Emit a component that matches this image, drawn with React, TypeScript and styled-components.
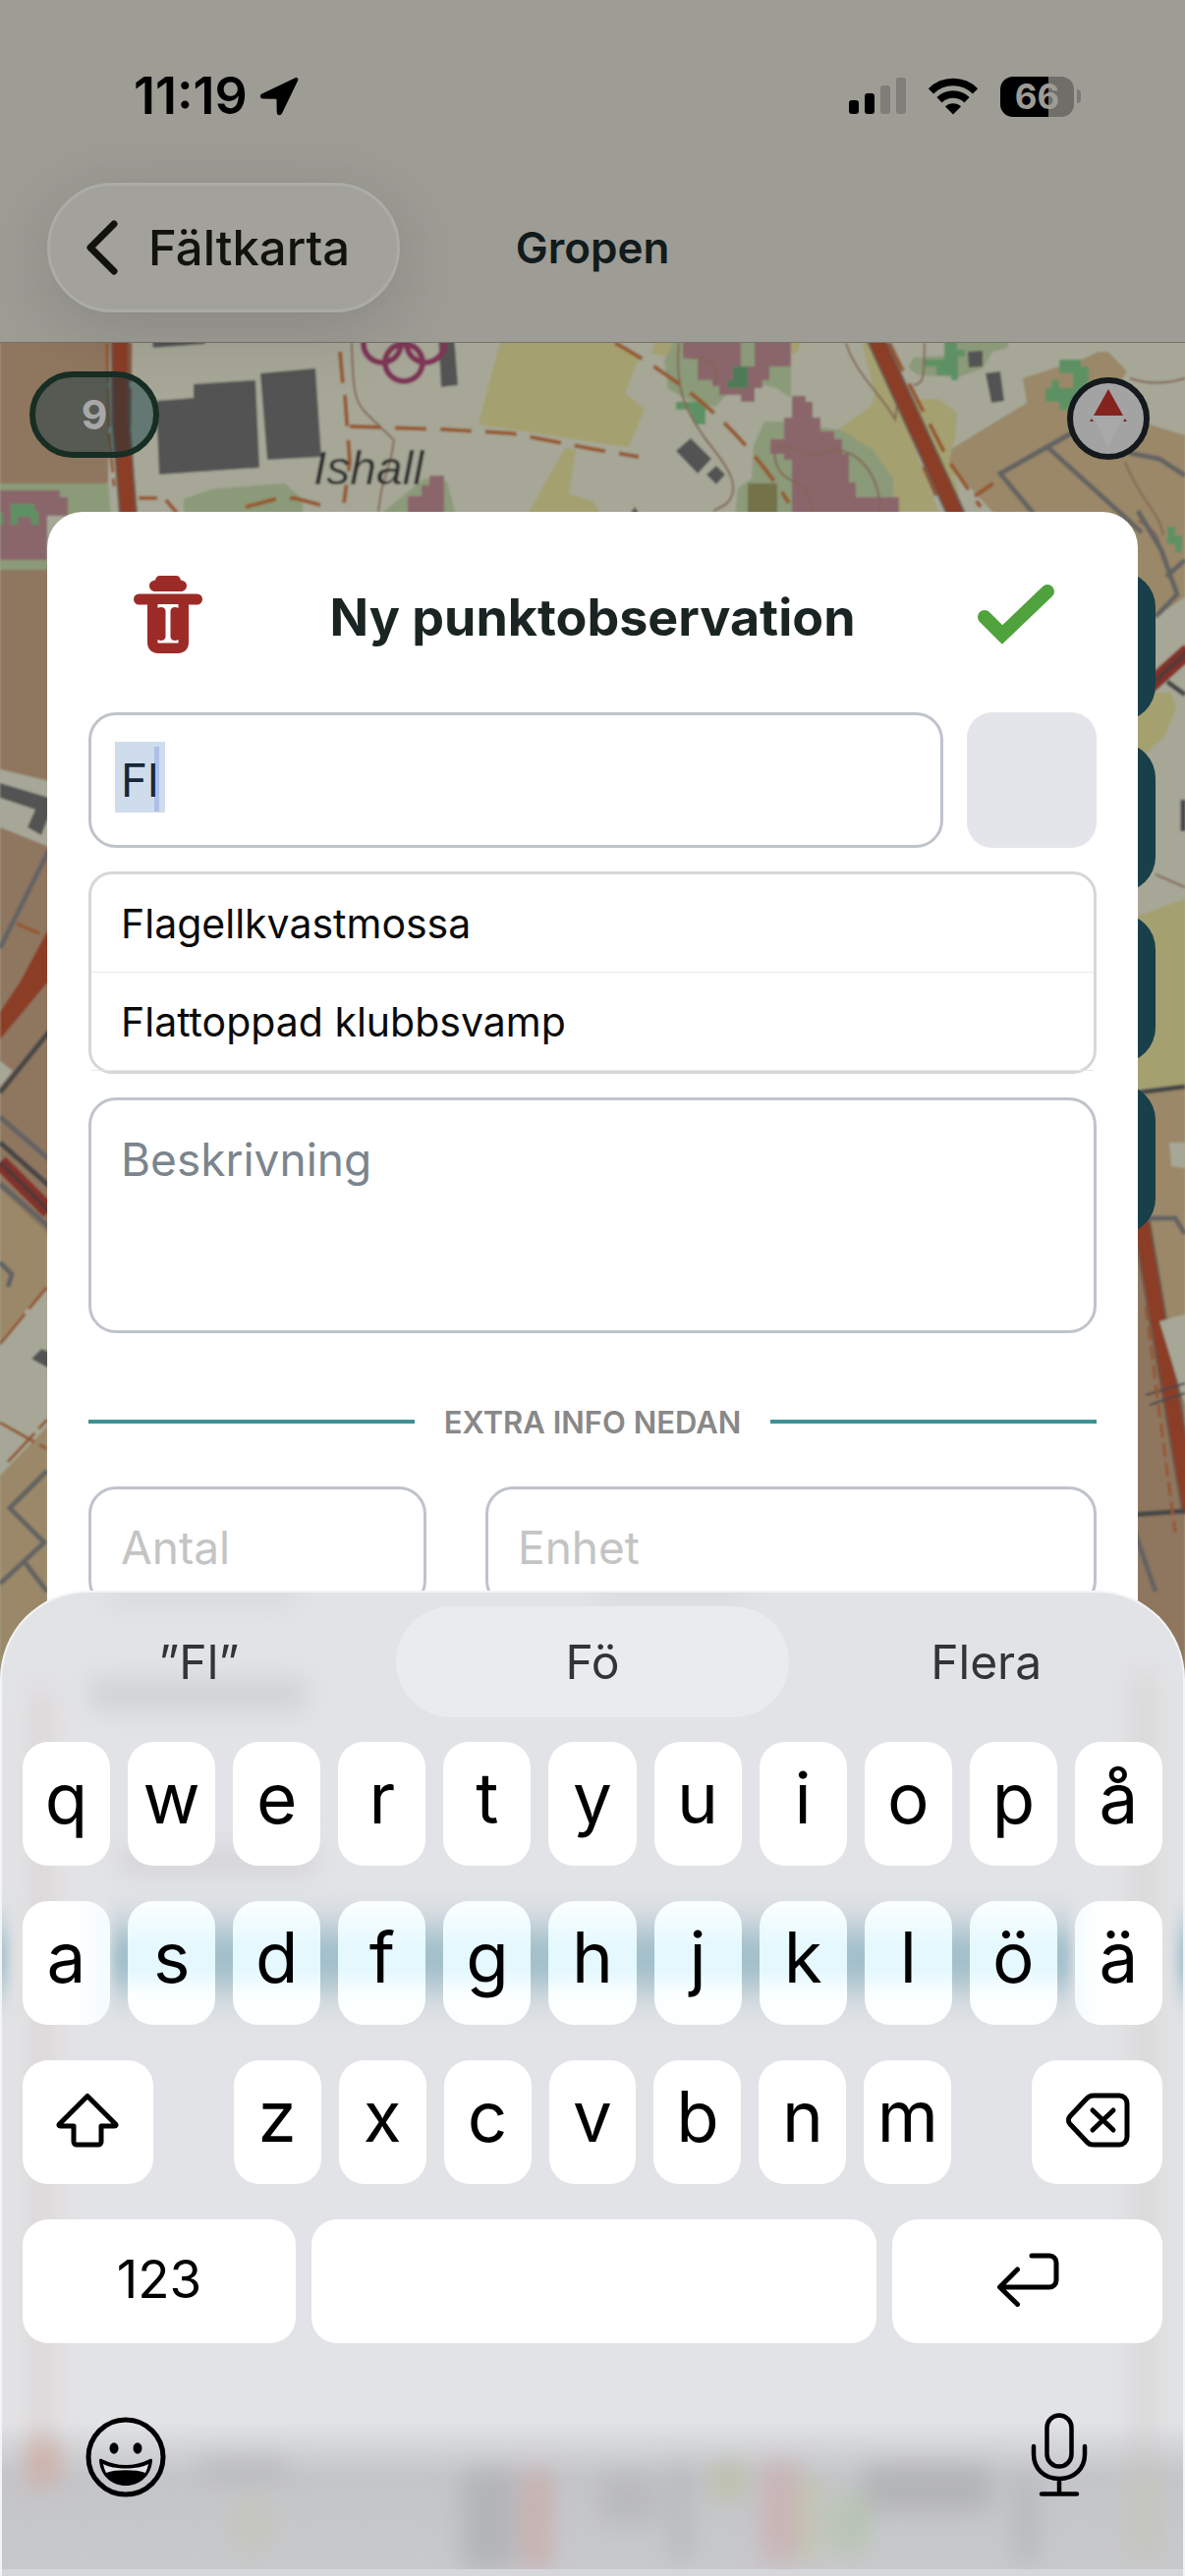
import React from "react";
import styled, { createGlobalStyle } from "styled-components";

const GlobalStyle = createGlobalStyle`
  *, *::before, *::after { box-sizing: border-box; }
  body {
    margin: 0;
    background: #9d9c95;
    font-family: Inter, "Noto Sans", "Liberation Sans", sans-serif;
  }
  button, input, textarea { font: inherit; color: inherit; margin: 0; }
  button { border: 0; padding: 0; background: none; cursor: pointer; }
`;

const Screen = styled.div`
  min-height: 100vh;
  display: flex;
  flex-direction: column;
`;

/* ---------- header ---------- */

const Header = styled.header`
  background: #9d9c95;
  border-bottom: 1px solid #73736b;
`;

const StatusBar = styled.div`
  display: flex;
  justify-content: space-between;
  align-items: center;
  height: 186px;
  padding: 10px 106px 0 136px;
`;

const StatusGroup = styled.div<{ $gap: number }>`
  display: flex;
  align-items: center;
  gap: ${(p) => p.$gap}px;
`;

const Time = styled.span`
  font-size: 52px;
  font-weight: 600;
  line-height: 60px;
`;

const Battery = styled.div`
  width: 75px;
  height: 41px;
  border-radius: 13px;
  background: linear-gradient(90deg, #000 66%, #6f6e69 66%);
  color: #9d9c95;
  font-size: 35px;
  font-weight: 700;
  line-height: 41px;
  text-align: center;
`;

const BatteryTip = styled.div`
  width: 4px;
  height: 14px;
  border-radius: 0 4px 4px 0;
  background: #7b7a74;
`;

const NavBar = styled.nav`
  display: grid;
  grid-template-columns: 1fr auto 1fr;
  align-items: center;
  padding: 0 48px 30px;
`;

const BackButton = styled.button`
  position: relative;
  z-index: 1;
  justify-self: start;
  display: flex;
  align-items: center;
  gap: 30px;
  height: 132px;
  padding: 0 48px 0 36px;
  border: 3px solid #acaca7;
  border-radius: 66px;
  background: #a2a19c;
  box-shadow: 0 16px 72px rgba(0, 0, 0, 0.14);
  color: #12120e;
  font-size: 49px;
  font-weight: 500;
`;

const PageTitle = styled.h1`
  margin: 0;
  color: #121b1c;
  font-size: 44px;
  font-weight: 600;
  line-height: 52px;
`;

/* ---------- map ---------- */

const MapArea = styled.main`
  position: relative;
  flex: 1;
  padding: 172px 48px 0;
  background: #a6a797;
  overflow: hidden;
`;

const MapCanvas = styled.svg`
  position: absolute;
  inset: 0;
  width: 100%;
  height: 100%;
`;

const CountBadge = styled.button`
  position: absolute;
  top: 29px;
  left: 30px;
  width: 132px;
  height: 88px;
  border: 6px solid #182d24;
  border-radius: 44px;
  background: rgba(0, 50, 62, 0.4);
  color: #a8a8a8;
  font-size: 41px;
  font-weight: 700;
`;

const CompassButton = styled.button`
  position: absolute;
  top: 35px;
  right: 36px;
  width: 84px;
  height: 84px;
  border: 6px solid #14191d;
  border-radius: 50%;
  background: #a3a3a3;
  svg { display: block; }
`;

const ToolStack = styled.div`
  position: absolute;
  top: 233px;
  right: 30px;
  display: flex;
  flex-direction: column;
  gap: 22px;
`;

const ToolButton = styled.button`
  width: 108px;
  height: 152px;
  border-radius: 36px;
  background: #183f4a;
`;

/* ---------- form sheet ---------- */

const Sheet = styled.form`
  position: relative;
  display: flex;
  flex-direction: column;
  gap: 24px;
  min-height: 1200px;
  padding: 50px 42px;
  border-radius: 36px 36px 0 0;
  background: #fff;
`;

const SheetHeader = styled.div`
  display: grid;
  grid-template-columns: 1fr auto 1fr;
  align-items: center;
  height: 130px;
  padding: 0 42px 20px;
  svg { display: block; }
`;

const SheetTitle = styled.h2`
  margin: 0;
  padding-top: 6px;
  color: #1a2422;
  font-size: 52px;
  font-weight: 700;
  line-height: 64px;
`;

const SheetAction = styled.button<{ $side: "start" | "end" }>`
  justify-self: ${(p) => p.$side};
`;

const Row = styled.div<{ $columns: string; $gap: number }>`
  display: grid;
  grid-template-columns: ${(p) => p.$columns};
  gap: ${(p) => p.$gap}px;
`;

const TextField = styled.input<{ $height: number }>`
  width: 100%;
  min-width: 0;
  height: ${(p) => p.$height}px;
  padding: 0 30px;
  border: 3px solid #bfc3cb;
  border-radius: 28px;
  background: #fff;
  font-size: 46px;
  outline: none;
  &::placeholder { color: #c4c4c4; opacity: 1; }
`;

const SpeciesField = styled(TextField)`
  color: #172838;
  background:
    linear-gradient(#adc0e6, #adc0e6) 64px 32px / 5px 66px no-repeat,
    linear-gradient(#cfdceb, #cfdceb) 24px 27px / 51px 72px no-repeat,
    #fff;
`;

const SpeciesButton = styled.button`
  height: 138px;
  border-radius: 26px;
  background: #e4e5ea;
`;

const Suggestions = styled.ul`
  margin: 0;
  padding: 0;
  list-style: none;
  border: 3px solid #d7d7d7;
  border-radius: 24px;
`;

const Suggestion = styled.button`
  display: block;
  width: 100%;
  height: 100px;
  padding: 0 30px;
  border-bottom: 1px solid #e8e8e8;
  color: #0a0a0a;
  font-size: 41px;
  text-align: left;
`;

const Notes = styled.textarea`
  display: block;
  width: 100%;
  height: 240px;
  padding: 30px;
  border: 3px solid #bfc3cb;
  border-radius: 28px;
  background: #fff;
  font-size: 46px;
  line-height: 60px;
  resize: none;
  outline: none;
  &::placeholder { color: #7b858e; opacity: 1; }
`;

const Divider = styled.div`
  display: flex;
  align-items: center;
  gap: 30px;
  height: 108px;
  padding-top: 24px;
  color: #888;
  font-size: 31px;
  font-weight: 600;
  &::before, &::after {
    content: "";
    flex: 1;
    height: 4px;
    background: #3f9193;
  }
`;

/* ---------- keyboard ---------- */

const Keyboard = styled.section`
  position: fixed;
  left: 0;
  right: 0;
  bottom: 0;
  padding: 14px 21px 80px;
  border: 2px solid #f3f4f6;
  border-bottom: 0;
  border-radius: 90px 90px 0 0;
  background: #e2e3e6;
  overflow: hidden;
`;

const Backdrop = styled.svg`
  position: absolute;
  inset: 0;
  width: 100%;
  height: 100%;
`;

const Predictions = styled.div`
  position: relative;
  display: grid;
  grid-template-columns: repeat(3, 1fr);
  margin: 0 -21px 25px;
`;

const Prediction = styled.button<{ $active?: boolean }>`
  height: 113px;
  border-radius: 57px;
  background: ${(p) => (p.$active ? "#eaebef" : "transparent")};
  color: #333437;
  font-size: 48px;
`;

const Keys = styled.div`
  position: relative;
  display: flex;
  flex-direction: column;
  gap: 36px;
`;

const KeyRow = styled.div<{ $gap?: number }>`
  display: flex;
  justify-content: space-between;
  gap: ${(p) => p.$gap ?? 18}px;
`;

const LetterGroup = styled.div`
  display: flex;
  flex: 733;
  gap: 18px;
  margin: 0 64px;
`;

type Tint = "none" | "full" | "right" | "left";

const tints: Record<Tint, string> = {
  none: "#fff",
  full: "linear-gradient(#fbffff 0%, #e4f8fe 38%, #e4f8fe 56%, #fbffff 76%, #fdffff 100%)",
  right: "linear-gradient(90deg, #fff 60%, #f3fcff 100%)",
  left: "linear-gradient(270deg, #fff 70%, #f3fcff 100%)",
};

const Key = styled.button<{ $grow?: number; $tint?: Tint; $small?: boolean }>`
  display: flex;
  flex: ${(p) => p.$grow ?? 89} 1 0;
  min-width: 0;
  height: 126px;
  justify-content: center;
  align-items: center;
  padding-bottom: ${(p) => (p.$small ? 4 : 12)}px;
  border-radius: 26px;
  background: ${(p) => tints[p.$tint ?? "none"]};
  color: #000;
  font-size: ${(p) => (p.$small ? 53 : 71)}px;
  line-height: 80px;
`;

const KeyboardFooter = styled.div`
  position: relative;
  display: flex;
  justify-content: space-between;
  align-items: flex-end;
  margin: 71px 76px 0 64px;
  svg { display: block; }
`;

/* ---------- drawings ---------- */

const LocationIcon = () => (
  <svg width="40" height="40" viewBox="0 0 40 40" aria-hidden="true">
    <path d="M36.500 1.200 3 17.200c-3.200 1.600-2.700 5.300.900 5.400l13 .200c.400 0 .600.200.600.600l.200 12.600c.100 3.800 3.900 4.300 5.500 1L39 4.200c1.100-2.300-.500-3.900-2.500-3z" />
  </svg>
);

const SignalIcon = () => (
  <svg width="58" height="38" viewBox="0 0 58 38" aria-hidden="true">
    <rect x="0" y="23" width="10" height="14" rx="3" />
    <rect x="16" y="16" width="10" height="21" rx="3" />
    <rect x="32" y="8" width="10" height="29" rx="3" fill="#7f7e78" />
    <rect x="48" y="0" width="10" height="37" rx="3" fill="#7f7e78" />
  </svg>
);

const WifiIcon = () => (
  <svg width="52" height="38" viewBox="0 0 52 38" aria-hidden="true">
    <path d="M3.500 13.800a32 32 0 0 1 45 0" fill="none" stroke="#000" strokeWidth="7.500" />
    <path d="M12 22.800a20 20 0 0 1 28 0" fill="none" stroke="#000" strokeWidth="7.500" />
    <path d="M26 37.500 18 29.600a11.500 11.500 0 0 1 16 0z" />
  </svg>
);

const BackIcon = () => (
  <svg width="34" height="58" viewBox="0 0 34 58" fill="none" stroke="#12120e" strokeWidth="7" strokeLinecap="round" strokeLinejoin="round" aria-hidden="true">
    <path d="M29 5 5 29l24 24" />
  </svg>
);

const TrashIcon = () => (
  <svg width="78" height="80" viewBox="-4 0 78 80" aria-hidden="true">
    <g fill="#9c2b28">
      <path d="M27 0h16c3 0 4.500 2 5 4.500 3.500.500 6 2.500 6 5.700S51.500 16 48 16H22c-3.500 0-6-2.500-6-5.800s2.500-5.200 6-5.700C22.500 2 24 0 27 0z" />
      <rect x="0" y="18.500" width="70" height="11" rx="5.500" />
      <path d="M14 26h42v42c0 7-5 11-11 11H25c-6 0-11-4-11-11z" />
    </g>
    <path d="M24.500 29h21v4c-3-2-8-1-8 3v26c0 4 5 5 8 3v3.500h-21V65c3 2 8 1 8-3V36c0-4-5-5-8-3z" fill="#fff" />
  </svg>
);

const CheckIcon = () => (
  <svg width="80" height="64" viewBox="0 0 80 64" fill="none" stroke="#4fa23c" strokeWidth="14" strokeLinecap="round" strokeLinejoin="miter" aria-hidden="true">
    <path d="M8 34 26 52 72 8" />
  </svg>
);

const CompassIcon = () => (
  <svg width="72" height="72" viewBox="0 0 72 72" aria-hidden="true">
    <path d="M36 6 51 33H21z" fill="#85231f" />
    <path d="M21 33h30L36 66z" fill="#a9a9a9" />
    <path d="m17 39 2-3 2 3zM51 39l2-3 2 3z" fill="#85231f" />
  </svg>
);

const lineIcon = {
  fill: "none",
  stroke: "#000",
  strokeWidth: 5,
  strokeLinejoin: "round" as const,
  strokeLinecap: "round" as const,
  "aria-hidden": true,
};

const ShiftIcon = () => (
  <svg width="64" height="56" viewBox="0 0 64 56" {...lineIcon}>
    <path d="M32 3.500 3.500 32c-1 1-.500 2 1 2H18v16a3 3 0 0 0 3 3h22a3 3 0 0 0 3-3V34h13.500c1.500 0 2-1 1-2z" />
  </svg>
);

const BackspaceIcon = () => (
  <svg width="66" height="56" viewBox="0 0 66 56" {...lineIcon}>
    <path d="M29 3h26a8 8 0 0 1 8 8v34a8 8 0 0 1-8 8H29a9 9 0 0 1-7-3L5 32a6 6 0 0 1 0-8L22 6a9 9 0 0 1 7-3z" />
    <path d="m28 18 21 20M49 18 28 38" />
  </svg>
);

const ReturnIcon = () => (
  <svg width="64" height="56" viewBox="0 0 64 56" {...lineIcon}>
    <path d="M36 4h18a7 7 0 0 1 7 7v18a7 7 0 0 1-7 7H4M21.500 18 3.500 36l18 17.500" />
  </svg>
);

const SmileIcon = () => (
  <svg width="82" height="82" viewBox="0 0 82 82" fill="none" aria-hidden="true">
    <circle cx="41" cy="41" r="38" stroke="#000" strokeWidth="5" />
    <ellipse cx="29" cy="32" rx="4.500" ry="5.800" fill="#000" />
    <ellipse cx="53" cy="32" rx="4.500" ry="5.800" fill="#000" />
    <path d="M14 44.500c0-2 1.500-2 3-1.300a53 53 0 0 0 48 0c1.500-.700 3-.700 3 1.300C67 60 55 70 41 70S15 60 14 44.500z" fill="#000" />
    <path d="M18 48c5 3 14 4.500 23 4.500S59 51 64 48c-.500 3-1.500 6-3 9-5-2-12-2.700-20-2.700s-15 .700-20 2.700c-1.500-3-2.500-6-3-9z" fill="#e2e3e6" />
  </svg>
);

const MicIcon = () => (
  <svg width="58" height="86" viewBox="0 0 58 86" fill="none" stroke="#000" strokeWidth="4.500" strokeLinecap="round" aria-hidden="true">
    <rect x="16.500" y="2.500" width="25" height="52" rx="12.500" />
    <path d="M3 34v8c0 15 11 25 26 25s26-10 26-25v-8M29 67v15M11 82.500h36" />
  </svg>
);

const MapDrawing = () => (
  <MapCanvas viewBox="0 349 1206 2273" preserveAspectRatio="xMidYMin slice" aria-hidden="true">
    <defs>
      <filter id="soften" x="0" y="0" width="100%" height="100%">
        <feGaussianBlur stdDeviation="0.8" />
      </filter>
    </defs>
    <g filter="url(#soften)">
      <rect x="0" y="340" width="1206" height="2290" fill="#a6a797" />
      <g fill="#8f765f">
        <path d="M0 340H112L110 492H0zM0 575H60V1270L0 1215z" />
        <path d="M1150 1240 1206 1400V1700H1150z" />
      </g>
      <g fill="#a4a06f">
        <path d="M511 340H612L651 363 636 400 656 416 640 455 603 450 487 432z" />
        <path d="M668 340H820L810 360 690 365 663 360z" />
        <path d="M575 456 586 458 579 503 603 510 613 525H536z" />
        <path d="M875 340H888L955 521H909L880 470 853 437 887 413 890 400z" />
        <path d="M928 407 955 406 974 420 972 447 966 462 980 521 960 500z" />
        <path d="M1158 705H1192L1197 720 1185 750 1165 768H1150zM1150 935 1206 915V1108H1150z" />
      </g>
      <g fill="#8b9a78">
        <path d="M0 492H110L113 525H0zM187 508 215 498 290 492 308 508V525H187zM385 525 432 487 455 490 464 525z" />
        <path d="M690 340H780L805 365V405L790 395 770 390 738 403 728 414 700 407 680 396 676 367z" />
        <path d="M778 429 799 429 857 438 888 458 909 487V525H748L751 497 765 487 767 453z" />
        <path d="M975 340H1026V354L1010 358 1000 375 975 384 935 382 924 374 930 364 960 362z" />
        <path d="M0 570H48V580H0z" />
      </g>
      <path d="M1041 385 1103 365 1118 358 1128 358 1147 378 1140 390 1170 432 1206 443V608L1158 640 1100 600 1010 521 966 473 968 457 1045 410z" fill="#9a8868" />
      <path d="M1150 1112 1206 1108V1338L1178 1345 1150 1240zM0 1210 48 1255V1308L0 1365zM0 1502 48 1452V1700H0z" fill="#9a8868" />
      <g fill="#8a666a">
        <path d="M0 499H61V506H69V525H48V570H0z" />
        <path d="M415 525V505H429V494H437V484H452V525z" />
        <path d="M695 340H754V373H768V340H805V373H783V387H776V395H768V409H754V402H732V393H725V387H710V365H695z" />
        <path d="M806 403H820V409H827V425H835V439H849V447H857V462H864V491H871V506H915V525H806V468H798V462H784V447H798V425H806z" />
      </g>
      <path d="M746 373H761V395H740V387H746z" fill="#4f7a56" />
      <path d="M761 492H791V525H761z" fill="#737248" />
      <g fill="#5d9164">
        <path d="M688 409H718V432H707L702 417H688zM961 340H974V356H982V363H975V387H968V382H953V373H940V366H961z" />
        <path d="M1078 366H1100V373H1108V387L1092 417H1078V409H1064V395H1070V387H1078V395H1092V380H1078z" />
        <path d="M11 513H35V520H39V534H32V526H18V534H11zM0 522H3V534H0zM1188 536H1196V545H1203V562H1196V554H1188z" />
      </g>
      <g fill="#525252">
        <path d="M154 340H209V350L156 354zM159 408 197 405V391L260 387 264 476 162 483zM265 380 321 375 327 465 272 468zM446 340H462L466 392 449 394z" />
        <path d="M703 446 724 467 710 482 688 459zM729 474 738 483 729 493 719 483zM1003 380 1018 378 1022 408 1009 410zM985 358 1000 357V373L986 374zM640 525 646 516 652 525z" />
      </g>
      <g fill="none" stroke="#7e3657" strokeWidth="6">
        <circle cx="389" cy="350" r="19" />
        <circle cx="433" cy="350" r="19" />
        <circle cx="411" cy="369" r="19" />
      </g>
      <g fill="none" stroke="#836656" strokeWidth="2">
        <path d="M358 349C359 400 362 410 372 420L401 448 398 465 388 500 385 521" />
        <path d="M691 349C686 400 700 420 718 447 745 480 752 495 742 510 735 518 730 516 726 521M861 349C870 380 900 405 911 427L914 405M941 349C940 380 942 390 930 392" />
        <path d="M704 365C720 360 734 375 728 392M790 455C810 450 820 470 840 460 870 452 895 480 896 521M788 460C790 500 825 480 826 521M1150 385C1170 392 1190 390 1206 385M1145 470C1160 510 1180 520 1184 545M1158 530C1180 540 1180 550 1183 570M1176 890 1206 903" />
      </g>
      <g fill="none" stroke="#96592f" strokeWidth="4" strokeDasharray="32 14">
        <path d="M346 358 349 392M351 402 356 470 350 512M356 434 450 437 520 441 603 457 650 465" />
        <path d="M626 349C690 385 750 430 803 512M905 349 930 400 966 470 998 516M992 505 1011 492M940 475 953 505M141 507 160 507M169 509 180 522M250 516 280 508 300 507 326 514" />
      </g>
      <g fill="none" stroke="#94562f" strokeWidth="3" strokeDasharray="40 6">
        <path d="M109 349 111 440 116 495M133 349 132 440 138 521M17 940 40 950M0 1368 48 1310M0 1448 48 1475M8 1488 48 1445" />
      </g>
      <path d="M122 340 123 430 131 530M889 340 976 530M1161 1240 1212 1540" fill="none" stroke="#6a5a4e" strokeWidth="19" />
      <path d="M122 340 123 430 131 530M889 340 976 530M1161 1240 1212 1540" fill="none" stroke="#8b3e28" strokeWidth="15" />
      <g fill="none" stroke="#646464" strokeWidth="5">
        <path d="M1092 440 1018 482 1052 523M1066 455 1162 542M1149 461 1180 467 1206 484M1158 520 1182 560 1198 605 1176 628M1187 587 1206 570" />
        <path d="M50 865 30 905 0 965M0 1137 50 1180M0 1205 50 1249M0 1285 12 1297 8 1310M48 1497 10 1535 45 1570 0 1612M25 1590 48 1620M1150 1240H1196L1206 1256M1150 1545 1176 1620" />
      </g>
      <path d="M0 783 50 795V862L0 842zM0 1080 13 1090 0 1106zM1176 630 1206 608V650L1176 690zM1190 1163H1206V1189L1192 1187zM1180 1345 1206 1338V1430z" fill="#a6a797" />
      <path d="M0 797 50 812V830L42 850 28 842 36 824 0 812zM32 1383 42 1373 50 1376V1393z" fill="#525252" />
      <path d="M50 944 20 1000 0 1030V1058L50 998z" fill="#8b3e28" />
      <g fill="none" stroke="#464646" strokeWidth="5">
        <path d="M50 1050 0 1112M0 1163 50 1207M1188 694 1206 707M1150 1113 1206 1106M1150 1542 1206 1538M1204 814V846" />
      </g>
      <path d="M1166 1420 1206 1408M1170 1430 1206 1418" stroke="#464646" strokeWidth="2" />
      <path d="M0 1183 50 1233M1170 698 1210 662" fill="none" stroke="#84302a" strokeWidth="16" />
      <path d="M0 1183 50 1233M1170 698 1210 662" fill="none" stroke="#573934" strokeWidth="5" />
      <path d="M1166 1330 1196 1560" fill="none" stroke="#94562f" strokeWidth="3" strokeDasharray="14 6" />
      <text x="319" y="493" fill="#2c2c2a" fontFamily="Liberation Sans, sans-serif" fontSize="48" fontStyle="italic">Ishall</text>
    </g>
  </MapCanvas>
);

const KeyboardBackdrop = () => (
  <Backdrop viewBox="0 0 1206 1003" preserveAspectRatio="none" aria-hidden="true">
    <defs>
      <filter id="haze" x="-20%" y="-50%" width="140%" height="200%">
        <feGaussianBlur stdDeviation="13" />
      </filter>
      <filter id="band" x="-5%" y="-80%" width="110%" height="260%">
        <feGaussianBlur stdDeviation="6 22" />
      </filter>
      <linearGradient id="floor" x1="0" y1="0" x2="0" y2="1">
        <stop offset="0" stopColor="#c4c5c9" stopOpacity="0" />
        <stop offset="0.35" stopColor="#c4c5c9" />
        <stop offset="1" stopColor="#c8c9cc" />
      </linearGradient>
    </defs>
    <g filter="url(#haze)">
      <rect x="90" y="88" width="220" height="32" fill="#d0d1d4" />
      <rect x="110" y="0" width="190" height="8" fill="#c9cace" />
      <rect x="610" y="0" width="150" height="8" fill="#cdced2" />
      <rect x="120" y="262" width="200" height="24" fill="#d3d3d8" />
      <rect x="34" y="100" width="12" height="800" fill="#d9c9c8" />
      <rect x="1160" y="80" width="12" height="820" fill="#d2cec9" />
    </g>
    <g filter="url(#band)" fill="#94b8c5">
      <rect x="112" y="345" width="980" height="56" />
      <rect x="-20" y="345" width="26" height="56" />
      <rect x="1200" y="345" width="26" height="56" />
    </g>
    <rect x="0" y="845" width="1206" height="158" fill="url(#floor)" />
    <g filter="url(#haze)">
      <ellipse cx="42" cy="888" rx="16" ry="26" fill="#cfada3" />
      <rect x="200" y="885" width="90" height="20" fill="#b9babd" />
      <rect x="470" y="896" width="56" height="100" fill="#b2b4b7" />
      <rect x="536" y="896" width="22" height="100" fill="#cba9a5" />
      <rect x="610" y="900" width="60" height="50" fill="#b9babb" />
      <rect x="682" y="890" width="22" height="100" fill="#b6bbbd" />
      <rect x="724" y="888" width="34" height="36" fill="#bdc0a8" />
      <rect x="776" y="888" width="36" height="100" fill="#c9b3b5" />
      <rect x="816" y="900" width="16" height="90" fill="#c2c5a9" />
      <ellipse cx="866" cy="950" rx="22" ry="34" fill="#b8c4b3" />
      <rect x="880" y="892" width="130" height="44" fill="#b2b3b6" />
      <rect x="1036" y="900" width="20" height="90" fill="#b4b6b9" />
      <rect x="1146" y="890" width="40" height="100" fill="#c5c6bf" />
      <ellipse cx="255" cy="950" rx="24" ry="34" fill="#c5c6be" />
    </g>
    <rect x="0" y="996" width="1206" height="7" fill="#d6d7d9" />
  </Backdrop>
);

/* ---------- page ---------- */

const topRow = [..."qwertyuiopå"];
const homeRow = [..."asdfghjklöä"];
const bottomRow = [..."zxcvbnm"];

const homeTint = (index: number): Tint =>
  index === 0 ? "right" : index === homeRow.length - 1 ? "left" : "full";

export default function App() {
  return (
    <Screen>
      <GlobalStyle />
      <Header>
        <StatusBar>
          <StatusGroup $gap={12}>
            <Time>11:19</Time>
            <LocationIcon />
          </StatusGroup>
          <StatusGroup $gap={22}>
            <SignalIcon />
            <WifiIcon />
            <StatusGroup $gap={3}>
              <Battery>66</Battery>
              <BatteryTip />
            </StatusGroup>
          </StatusGroup>
        </StatusBar>
        <NavBar>
          <BackButton type="button">
            <BackIcon />
            Fältkarta
          </BackButton>
          <PageTitle>Gropen</PageTitle>
        </NavBar>
      </Header>

      <MapArea>
        <MapDrawing />
        <CountBadge type="button">9</CountBadge>
        <CompassButton type="button" aria-label="Kompass">
          <CompassIcon />
        </CompassButton>
        <ToolStack>
          {["Lager", "Position", "Punkt", "Yta"].map((name) => (
            <ToolButton key={name} type="button" aria-label={name} />
          ))}
        </ToolStack>

        <Sheet onSubmit={(event) => event.preventDefault()}>
          <SheetHeader>
            <SheetAction $side="start" type="button" aria-label="Ta bort">
              <TrashIcon />
            </SheetAction>
            <SheetTitle>Ny punktobservation</SheetTitle>
            <SheetAction $side="end" type="submit" aria-label="Spara">
              <CheckIcon />
            </SheetAction>
          </SheetHeader>
          <Row $columns="1fr 132px" $gap={24}>
            <SpeciesField $height={138} aria-label="Art" defaultValue="Fl" />
            <SpeciesButton type="button" aria-label="Välj art" />
          </Row>
          <Suggestions>
            {["Flagellkvastmossa", "Flattoppad klubbsvamp"].map((name) => (
              <li key={name}>
                <Suggestion type="button">{name}</Suggestion>
              </li>
            ))}
          </Suggestions>
          <Notes aria-label="Beskrivning" placeholder="Beskrivning" />
          <Divider>EXTRA INFO NEDAN</Divider>
          <Row $columns="344fr 622fr" $gap={60}>
            <TextField $height={124} aria-label="Antal" placeholder="Antal" />
            <TextField $height={124} aria-label="Enhet" placeholder="Enhet" />
          </Row>
        </Sheet>
      </MapArea>

      <Keyboard aria-label="Tangentbord">
        <KeyboardBackdrop />
        <Predictions>
          <Prediction type="button">”Fl”</Prediction>
          <Prediction type="button" $active>Fö</Prediction>
          <Prediction type="button">Flera</Prediction>
        </Predictions>
        <Keys>
          <KeyRow>
            {topRow.map((letter) => (
              <Key key={letter} type="button">{letter}</Key>
            ))}
          </KeyRow>
          <KeyRow>
            {homeRow.map((letter, index) => (
              <Key key={letter} type="button" $tint={homeTint(index)}>{letter}</Key>
            ))}
          </KeyRow>
          <KeyRow>
            <Key type="button" $grow={133} $small aria-label="Skift">
              <ShiftIcon />
            </Key>
            <LetterGroup>
              {bottomRow.map((letter) => (
                <Key key={letter} type="button">{letter}</Key>
              ))}
            </LetterGroup>
            <Key type="button" $grow={133} $small aria-label="Radera">
              <BackspaceIcon />
            </Key>
          </KeyRow>
          <KeyRow $gap={16}>
            <Key type="button" $grow={278} $small>123</Key>
            <Key type="button" $grow={575} $small aria-label="Mellanslag" />
            <Key type="button" $grow={275} $small aria-label="Retur">
              <ReturnIcon />
            </Key>
          </KeyRow>
        </Keys>
        <KeyboardFooter>
          <button type="button" aria-label="Emoji">
            <SmileIcon />
          </button>
          <button type="button" aria-label="Diktering">
            <MicIcon />
          </button>
        </KeyboardFooter>
      </Keyboard>
    </Screen>
  );
}
